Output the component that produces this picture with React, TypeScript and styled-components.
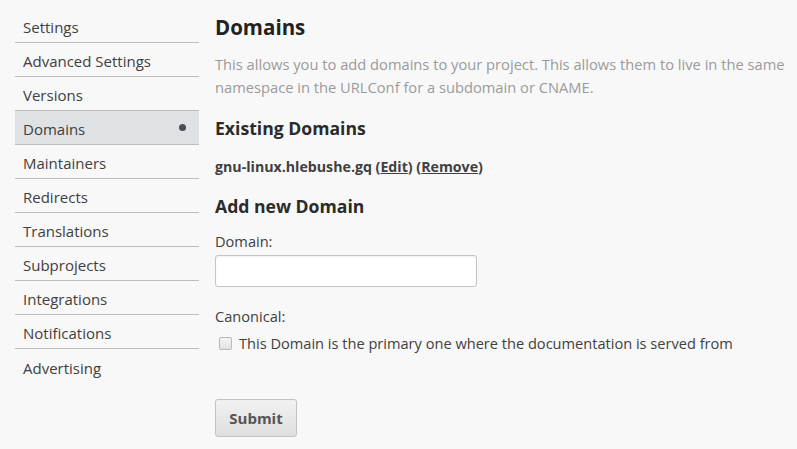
import React from 'react';
import styled, { createGlobalStyle } from 'styled-components';

const GlobalStyle = createGlobalStyle`
  html, body {
    margin: 0;
    padding: 0;
    background: #f8f8f8;
  }
  body {
    font-family: 'Open Sans', 'Noto Sans', sans-serif;
    color: #404040;
  }
`;

const Container = styled.div`
  display: flex;
  align-items: flex-start;
  gap: 16px;
  padding: 9px 0 0 15px;
  width: 797px;
  height: 449px;
  box-sizing: border-box;
  overflow: hidden;
`;

const Menu = styled.ul`
  list-style: none;
  margin: 0;
  padding: 0;
  width: 184px;
  flex-shrink: 0;
`;

const MenuItem = styled.li<{ $active?: boolean }>`
  display: flex;
  align-items: center;
  justify-content: space-between;
  height: 34px;
  padding: 3px 8px 0;
  box-sizing: border-box;
  font-size: 15px;
  color: #404040;
  background: ${(p) => (p.$active ? '#dfe2e5' : 'transparent')};
  border-bottom: 1px solid #bdbdbd;

  &:last-child {
    border-bottom: none;
  }
`;

const Dot = styled.span`
  width: 7px;
  height: 7px;
  border-radius: 50%;
  background: #4a4d52;
  margin: -3px 5px 0 0;
`;

const Content = styled.div`
  flex: 1;
  padding-right: 10px;
`;

const Title = styled.h1`
  margin: 3px 0 0;
  font-size: 20.5px;
  font-weight: 700;
  line-height: 30px;
  color: #222;
`;

const Description = styled.p`
  margin: 11px 0 0;
  font-size: 14.7px;
  line-height: 23px;
  color: #9b9b9b;
`;

const Heading = styled.h3`
  margin: 0;
  font-size: 17.6px;
  font-weight: 700;
  line-height: 26px;
  color: #2b2b2b;
`;

const Existing = styled.div`
  margin-top: 16px;
`;

const DomainLine = styled.p`
  margin: 16px 0 0;
  font-size: 14.2px;
  font-weight: 700;
  line-height: 20px;
  color: #404040;

  a {
    color: #404040;
    text-decoration: underline;
  }
`;

const AddNew = styled.div`
  margin-top: 16px;
`;

const Label = styled.label`
  display: block;
  font-size: 14.6px;
  line-height: 20px;
  color: #404040;
`;

const Field = styled.div<{ $top: number }>`
  margin-top: ${(p) => p.$top}px;
`;

const TextInput = styled.input`
  display: block;
  margin-top: 4px;
  width: 262px;
  height: 32px;
  box-sizing: border-box;
  border: 1px solid #c4c4c4;
  border-radius: 3px;
  background: #fff;
  box-shadow: inset 0 1px 2px rgba(0, 0, 0, 0.06);
`;

const CheckRow = styled.label`
  display: flex;
  align-items: center;
  gap: 7px;
  margin-top: 7px;
  padding-left: 4px;
  font-size: 14.6px;
  line-height: 20px;
  color: #404040;
`;

const Box = styled.span`
  width: 11px;
  height: 11px;
  border: 1px solid #b9b9b9;
  border-radius: 2px;
  background: linear-gradient(#f4f4f4, #e2e2e2);
`;

const SubmitButton = styled.button`
  margin-top: 46px;
  width: 82px;
  height: 38px;
  border: 1px solid #c2c2c2;
  border-radius: 3px;
  background: linear-gradient(#f2f2f2, #dedede);
  font-family: inherit;
  font-size: 15px;
  font-weight: 700;
  color: #555;
`;

const MENU = [
  'Settings',
  'Advanced Settings',
  'Versions',
  'Domains',
  'Maintainers',
  'Redirects',
  'Translations',
  'Subprojects',
  'Integrations',
  'Notifications',
  'Advertising',
];

const App: React.FC = () => {
  return (
    <>
      <GlobalStyle />
      <Container>
        <Menu>
          {MENU.map((item) => (
            <MenuItem key={item} $active={item === 'Domains'}>
              {item}
              {item === 'Domains' && <Dot />}
            </MenuItem>
          ))}
        </Menu>
        <Content>
          <Title>Domains</Title>
          <Description>
            This allows you to add domains to your project. This allows them to live in the same
            namespace in the URLConf for a subdomain or CNAME.
          </Description>
          <Existing>
            <Heading>Existing Domains</Heading>
            <DomainLine>
              gnu-linux.hlebushe.gq (<a href="#">Edit</a>) (<a href="#">Remove</a>)
            </DomainLine>
          </Existing>
          <AddNew>
            <Heading>Add new Domain</Heading>
            <Field $top={12}>
              <Label>Domain:</Label>
              <TextInput type="text" />
            </Field>
            <Field $top={19}>
              <Label>Canonical:</Label>
              <CheckRow>
                <Box />
                This Domain is the primary one where the documentation is served from
              </CheckRow>
            </Field>
            <SubmitButton>Submit</SubmitButton>
          </AddNew>
        </Content>
      </Container>
    </>
  );
};

export default App;
